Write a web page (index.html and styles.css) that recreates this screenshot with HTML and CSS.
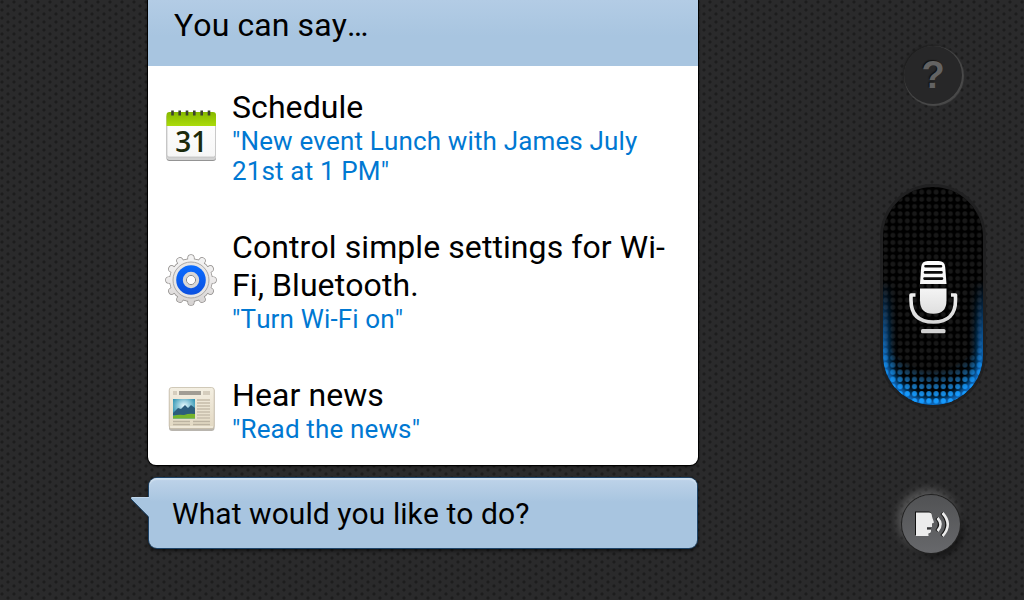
FILE: index.html
```html
<!DOCTYPE html>
<html lang="en">

<head>
    <meta charset="UTF-8">
    <meta name="viewport" content="width=device-width, initial-scale=1.0">
    <title>Voice Assistant</title>
    <link rel="stylesheet" href="styles.css">
</head>

<body>
    <main class="conversation">
        <section class="card">
            <h1 class="card-header">You can say…</h1>
            <ul class="suggestions">
                <li class="suggestion">
                    <svg class="icon" viewBox="0 0 54 54">
                        <defs>
                            <linearGradient id="calTop" x1="0" y1="0" x2="0" y2="1">
                                <stop offset="0" stop-color="#86b800" />
                                <stop offset="1" stop-color="#aadb0a" />
                            </linearGradient>
                            <linearGradient id="calPage" x1="0" y1="0" x2="0" y2="1">
                                <stop offset="0" stop-color="#fff" />
                                <stop offset="1" stop-color="#f6f6f6" />
                            </linearGradient>
                        </defs>
                        <rect x="2.500" y="5" width="49.500" height="47" rx="3" fill="#666" opacity=".7" />
                        <rect x="2.500" y="5" width="49.500" height="46" rx="3" fill="#d2d2d2" />
                        <rect x="3" y="6" width="48.500" height="42" rx="2" fill="url(#calPage)" stroke="#bbb" stroke-width=".7" />
                        <path d="M2.500 17V6q0-3 3-3h43.500q3 0 3 3v11z" fill="url(#calTop)" />
                        <path d="M8.500 1.500v5M15.700 1.500v5M23 1.500v5M30.300 1.500v5M37.700 1.500v5M45 1.500v5" stroke="#3b4130" stroke-width="2.600" />
                        <text class="cal-day" x="27.300" y="42.500">31</text>
                    </svg>
                    <div class="suggestion-text">
                        <h2>Schedule</h2>
                        <p>"New event Lunch with James July 21st at 1 PM"</p>
                    </div>
                </li>
                <li class="suggestion">
                    <svg class="icon" viewBox="0 0 54 54">
                        <defs>
                            <linearGradient id="metal" x1="0" y1="0" x2="0" y2="54" gradientUnits="userSpaceOnUse">
                                <stop offset="0" stop-color="#f4f4f4" />
                                <stop offset=".5" stop-color="#eceaea" />
                                <stop offset="1" stop-color="#d3d0cf" />
                            </linearGradient>
                            <linearGradient id="blueRing" x1="0" y1="0" x2="0" y2="1">
                                <stop offset="0" stop-color="#0a6cff" />
                                <stop offset="1" stop-color="#0b50e0" />
                            </linearGradient>
                            <path id="teeth" d="M27 4.800v44.400M15.900 7.770l22.200 38.460M7.770 15.900l38.460 22.200M4.800 27.010h44.400M7.770 38.100l38.460-22.200M15.900 46.230l22.200-38.460" stroke-linecap="round" />
                        </defs>
                        <use href="#teeth" stroke="#8d8a88" stroke-width="7.200" />
                        <circle cx="27" cy="27" r="21.800" fill="#8d8a88" />
                        <use href="#teeth" stroke="url(#metal)" stroke-width="5.800" />
                        <circle cx="27" cy="27" r="21.100" fill="url(#metal)" />
                        <circle cx="27" cy="27" r="18" fill="#e6e5e5" stroke="#aaa8a7" stroke-width="1" />
                        <circle cx="27" cy="27" r="14.800" fill="url(#blueRing)" />
                        <circle cx="27" cy="27" r="6.600" fill="#fff" stroke="#d9d8d6" stroke-width="3.200" />
                        <circle cx="27" cy="27" r="4.600" fill="#fff" stroke="#8c8c8c" stroke-width="1" />
                    </svg>
                    <div class="suggestion-text">
                        <h2>Control simple settings for Wi-Fi, Bluetooth.</h2>
                        <p>"Turn Wi-Fi on"</p>
                    </div>
                </li>
                <li class="suggestion">
                    <svg class="icon" viewBox="0 0 54 54">
                        <defs>
                            <linearGradient id="paper" x1="0" y1="0" x2="0" y2="1">
                                <stop offset="0" stop-color="#f4efe2" />
                                <stop offset="1" stop-color="#e2d8c2" />
                            </linearGradient>
                            <radialGradient id="sky" cx=".5" cy=".35" r=".6">
                                <stop offset="0" stop-color="#e8fbff" />
                                <stop offset="1" stop-color="#2b91b0" />
                            </radialGradient>
                        </defs>
                        <rect x="5" y="6" width="45.500" height="43" rx="3" fill="#8a8478" opacity=".6" />
                        <rect x="5.200" y="5.500" width="45" height="41" rx="2.500" fill="url(#paper)" stroke="#c5bda9" stroke-width=".8" />
                        <path d="M6 45h43" stroke="#fbf8ee" stroke-width="1" />
                        <path d="M9 11h4M39 11h7" stroke="#d5cdbd" stroke-width="4" />
                        <path d="M15 11h22" stroke="#a19d94" stroke-width="4" />
                        <rect x="9" y="17" width="22" height="19.500" fill="url(#sky)" />
                        <path d="M9 31l5-5 3 1 4-4 3 3 3-3 4 3v7H9z" fill="#2c5d7c" />
                        <path d="M9 34q5-2 11-1 5-2 11-1v4.500H9z" fill="#76b52c" />
                        <path d="M33 18h13M33 21h13M33 24h13M33 27h13M33 30h13M33 33h13M33 36h13" stroke="#cfc6b4" stroke-width="1.800" />
                        <path d="M9 39.500h17M29 39.500h17M9 42.500h17M29 42.500h17" stroke="#bcb3a1" stroke-width="1.500" />
                    </svg>
                    <div class="suggestion-text">
                        <h2>Hear news</h2>
                        <p>"Read the news"</p>
                    </div>
                </li>
            </ul>
        </section>

        <div class="bubble">
            <svg class="bubble-tail" viewBox="0 0 20 24">
                <path d="M20 1.500H1.500Q.5 2 1.500 3.500L20 22z" fill="#a8c5e0" />
                <path d="M1 3L18 20.500" stroke="#1e4468" fill="none" />
                <path d="M1.500 1.500H19" stroke="#bfd6eb" />
            </svg>
            What would you like to do?
        </div>
    </main>

    <aside class="controls">
        <button class="help-btn" aria-label="Help">?</button>

        <button class="mic-btn" aria-label="Microphone">
            <svg width="112" height="230" viewBox="0 0 112 230">
                <defs>
                    <pattern id="dots" x="-2.100" y=".3" width="7.200" height="7.200" patternUnits="userSpaceOnUse">
                        <circle cx="3.600" cy="3.600" r="2.400" fill="#181818" />
                    </pattern>
                    <pattern id="blueDots" x="-2.100" y=".3" width="7.200" height="7.200" patternUnits="userSpaceOnUse">
                        <circle cx="3.600" cy="3.600" r="2.600" fill="#169bff" />
                    </pattern>
                    <clipPath id="pill">
                        <rect x="6" y="6" width="100" height="218" rx="50" />
                    </clipPath>
                    <filter id="soft" x="-30%" y="-30%" width="160%" height="160%">
                        <feGaussianBlur stdDeviation="4.500" />
                    </filter>
                    <linearGradient id="fade" x1="0" y1="100" x2="0" y2="190" gradientUnits="userSpaceOnUse">
                        <stop offset="0" stop-color="#000" />
                        <stop offset=".6" stop-color="#bbb" />
                        <stop offset="1" stop-color="#fff" />
                    </linearGradient>
                    <mask id="glowMask">
                        <rect width="112" height="230" fill="url(#fade)" />
                    </mask>
                    <radialGradient id="dotFade" cx="56" cy="138" r="84" gradientUnits="userSpaceOnUse">
                        <stop offset=".6" stop-color="#000" />
                        <stop offset=".95" stop-color="#fff" />
                    </radialGradient>
                    <mask id="dotMask">
                        <rect y="158" width="112" height="72" fill="url(#dotFade)" />
                    </mask>
                    <linearGradient id="micFill" x1="0" y1="80" x2="0" y2="152" gradientUnits="userSpaceOnUse">
                        <stop offset="0" stop-color="#fff" />
                        <stop offset=".4" stop-color="#f3f3f3" />
                        <stop offset="1" stop-color="#cfcfcf" />
                    </linearGradient>
                </defs>
                <rect x="3" y="3" width="106" height="224" rx="53" fill="#202021" />
                <g clip-path="url(#pill)">
                    <rect x="6" y="6" width="100" height="218" fill="#000" />
                    <rect x="6" y="6" width="100" height="218" fill="url(#dots)" />
                    <g mask="url(#glowMask)">
                        <rect x="5" y="5" width="102" height="220" rx="51" fill="none" stroke="#0a80e6" stroke-width="12" filter="url(#soft)" />
                    </g>
                    <rect x="6" y="148" width="100" height="78" fill="url(#blueDots)" mask="url(#dotMask)" />
                </g>
                <path d="M43 103L44.200 86q.5-6 6.500-6h11q6 0 6.500 6l1.300 17z" fill="url(#micFill)" />
                <path d="M48.500 85.200h15.500M48 91.400h16.500M47.500 97.600h17.500" stroke="#0b0b0b" stroke-width="2.600" stroke-linecap="round" />
                <path d="M43 107.500h26.500v12q0 13.300-13.200 13.300T43 119.500z" fill="url(#micFill)" />
                <path d="M38.500 114H34v5q0 22 22.300 22T78.500 119v-5H74" fill="none" stroke="url(#micFill)" stroke-width="3.600" stroke-linejoin="round" />
                <rect x="44" y="148" width="24.500" height="4.200" rx="1.500" fill="#d2d2d2" />
            </svg>
        </button>

        <button class="speak-btn" aria-label="Speak">
            <svg width="58" height="58" viewBox="0 0 58 58">
                <g id="talk">
                    <path d="M14 17.500h13.500q3 0 3 4l1.500 5.500-2 1v4h-4v2.500h4v3.500q0 1.500-2.500 1.500V41H14z" fill="#111" transform="translate(-1 -1)" />
                    <path d="M14 17.500h13q3 0 3 4l2 6-2 1v3.500h-5v2.500h4v2q0 2-2.500 2V41H14z" fill="#ececec" />
                    <path d="M34.500 23q6 6.500 0 13M39.500 18q10.500 11.500 0 23" fill="none" stroke="#161616" stroke-width="3" />
                    <path d="M35.500 23q6 6.500 0 13M40.500 18q10.500 11.500 0 23" fill="none" stroke="#ececec" stroke-width="2.600" />
                </g>
            </svg>
        </button>
    </aside>
</body>

</html>
```
FILE: styles.css
```css
* {
    box-sizing: border-box;
}

body {
    margin: 0;
    height: 600px;
    overflow: hidden;
    display: flex;
    justify-content: space-between;
    padding-left: 148px;
    font-family: Roboto, "Liberation Sans", sans-serif;
    font-kerning: none;
    color: #000;
    background-color: #2a2a2b;
    background-image:
        radial-gradient(circle, #1d1d1d 0.8px, transparent 2.2px),
        radial-gradient(circle, #1d1d1d 0.8px, transparent 2.2px);
    background-size: 12px 8px;
    background-position: 2px 2px, 8px -2px;
}

h1,
h2,
p,
ul {
    margin: 0;
    padding: 0;
    font-weight: 400;
}

button {
    border: none;
    padding: 0;
    cursor: pointer;
}

.conversation {
    width: 550px;
}

.card {
    height: 465px;
    background-color: #fff;
    border-radius: 0 0 8px 8px;
    box-shadow: 0 0 0 1px #000, 0 1px 3px rgba(0, 0, 0, 0.8);
}

.card-header {
    height: 66px;
    padding: 6px 26px 0;
    font-size: 32px;
    line-height: 38px;
    letter-spacing: 0.1px;
    background: linear-gradient(#b3cce5, #a8c5e0 36px);
}

.suggestions {
    list-style: none;
    padding: 22px 16px 0;
    display: flex;
    flex-direction: column;
    gap: 42px;
}

.suggestion {
    display: flex;
    align-items: center;
    gap: 14px;
}

.icon {
    width: 54px;
    height: 54px;
    flex: none;
    position: relative;
    top: -1px;
}

.cal-day {
    font: 600 28px "Open Sans", sans-serif;
    fill: #1b2a0c;
    text-anchor: middle;
}

.suggestion-text h2 {
    font-size: 32px;
    line-height: 38px;
    letter-spacing: 0.08px;
}

.suggestion-text p {
    font-size: 26px;
    line-height: 30px;
    letter-spacing: 0.15px;
    color: #0078d2;
}

.bubble {
    position: relative;
    width: 548px;
    height: 70px;
    margin-top: 13px;
    margin-left: 1px;
    padding-left: 23px;
    font-size: 30px;
    line-height: 71px;
    letter-spacing: 0.07px;
    border-radius: 8px;
    background: linear-gradient(#bed3e9, #a8c5e0 24px);
    box-shadow: inset 0 2px 1px #cfe0f0, 0 0 0 1px #1e4468, 0 2px 4px rgba(0, 0, 0, 0.8);
}

.bubble-tail {
    position: absolute;
    left: -19px;
    top: 18px;
    width: 20px;
    height: 24px;
}

.controls {
    width: 182px;
    display: flex;
    flex-direction: column;
    align-items: center;
}

.help-btn {
    width: 58px;
    height: 58px;
    margin-top: 46px;
    border-radius: 50%;
    font: bold 38px/59px "Liberation Sans", sans-serif;
    color: #636363;
    text-shadow: -1px -1px 1px #111;
    background-color: #272728;
    box-shadow: 1px 1px 1px 1px #4a4a4a, -1px -1px 2px #1d1d1d;
}

.mic-btn {
    height: 230px;
    margin-top: 77px;
    background: none;
}

.speak-btn {
    width: 58px;
    height: 58px;
    margin: 84px 4px 0 0;
    border-radius: 50%;
    background: linear-gradient(#515254, #67686b);
    box-shadow: 0 0 0 1px #222, -3px -4px 10px 1px rgba(150, 150, 150, 0.45), 3px 4px 6px rgba(0, 0, 0, 0.6);
}
```
